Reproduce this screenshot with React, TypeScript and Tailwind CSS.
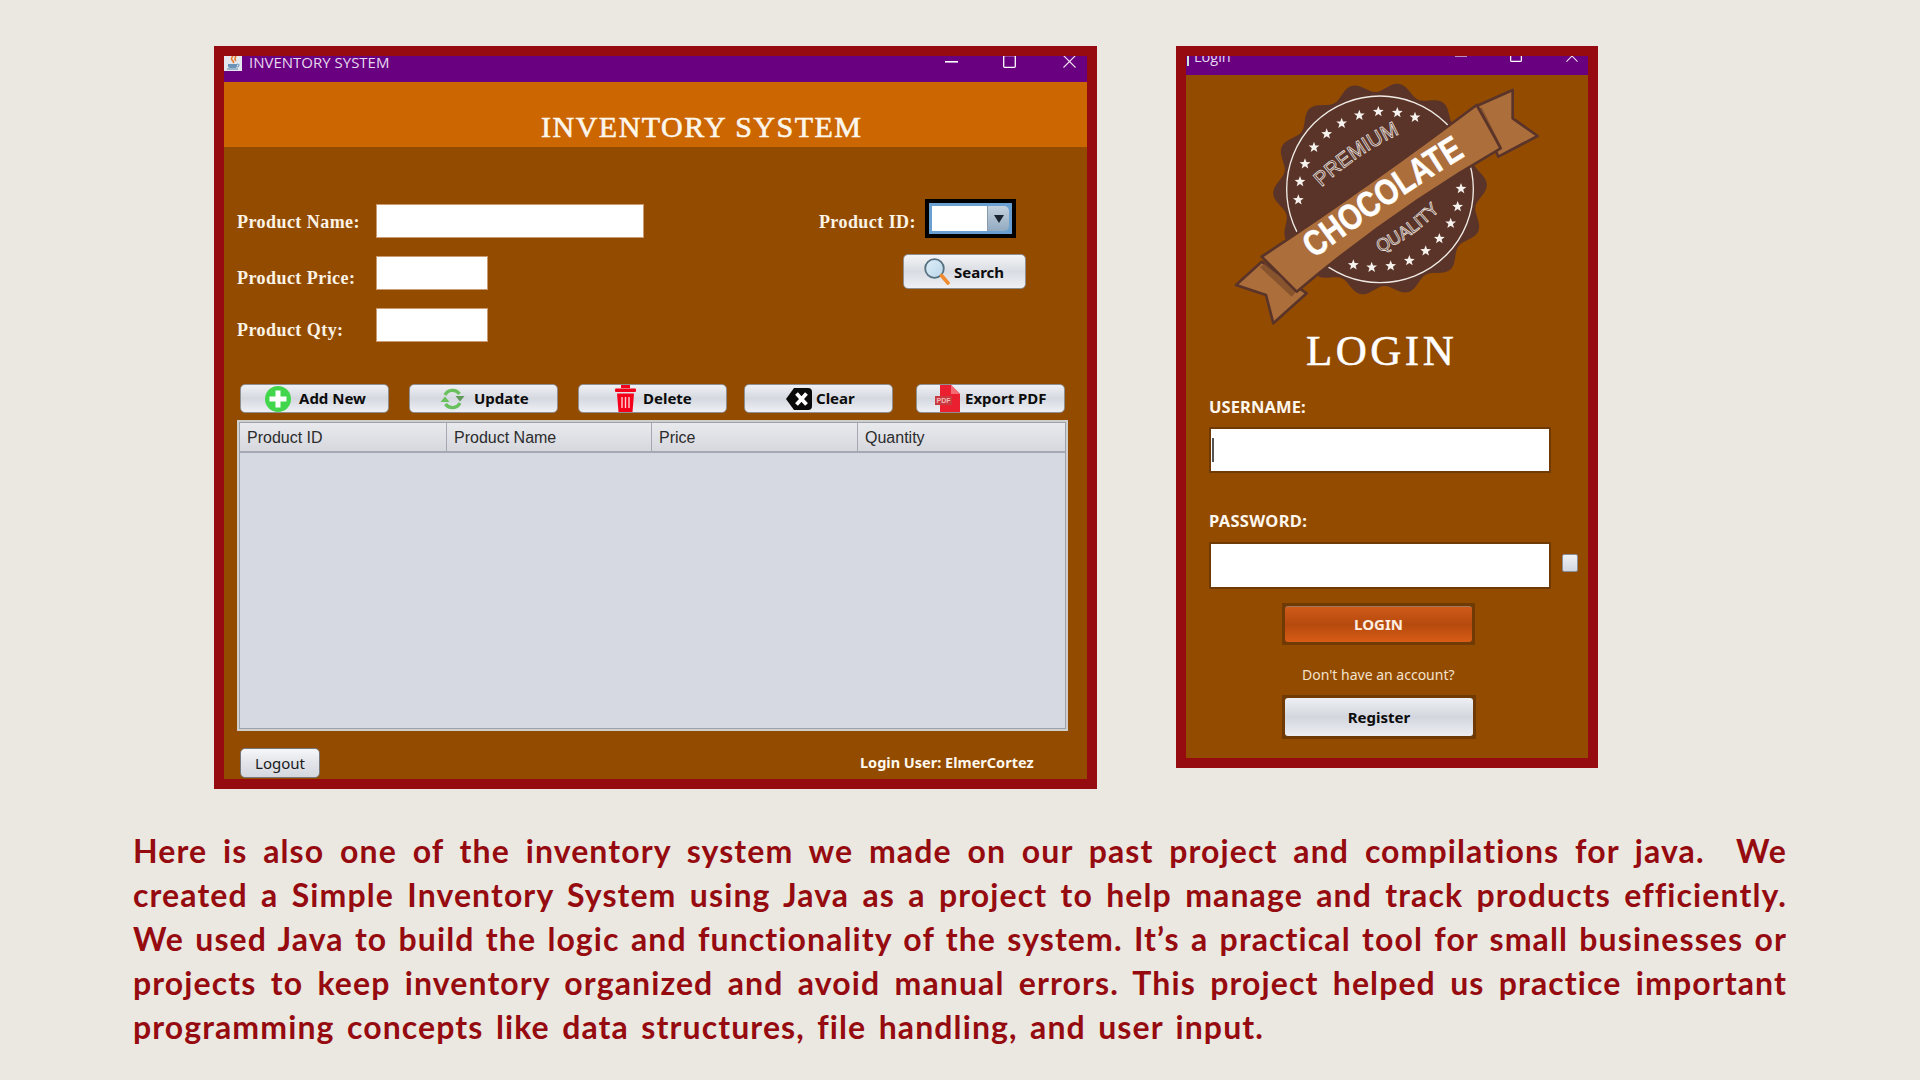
const scallop = (() => {
  const cx = 660, cy = 477, n = 14;
  const pts: string[] = [];
  for (let i = 0; i < 360; i += 2) {
    const t = (i * Math.PI) / 180;
    const r = 306 + 15 * Math.cos(n * t + 0.6);
    pts.push(`${(cx + r * Math.cos(t)).toFixed(1)},${(cy + r * Math.sin(t)).toFixed(1)}`);
  }
  return "M" + pts.join("L") + "Z";
})();

const starPts = (x: number, y: number, R = 17) => {
  const p: string[] = [];
  for (let i = 0; i < 10; i++) {
    const r = i % 2 ? R * 0.42 : R;
    const a = (-90 + i * 36) * Math.PI / 180;
    p.push(`${(x + r * Math.cos(a)).toFixed(1)},${(y + r * Math.sin(a)).toFixed(1)}`);
  }
  return p.join(" ");
};

const stars = [
  [415, 510], [420, 455], [435, 402], [462, 352], [500, 312], [545, 280], [598, 256], [655, 245], [712, 248], [765, 262],
  [580, 705], [635, 712], [692, 708], [748, 692], [797, 663], [838, 626], [872, 580], [893, 530], [903, 476],
];

function Badge() {
  return (
    <svg viewBox="0 0 402 255" className="block w-[402px] h-[255px]">
      <g transform="translate(-26,-45) scale(0.33333)">
        <path d={scallop} fill="#5a3429" />
        <circle cx="660" cy="478" r="280" fill="none" stroke="#f1ece6" strokeWidth="4" />
        {stars.map(([x, y], i) => (
          <polygon key={i} points={starPts(x, y)} fill="#f6f2ee" />
        ))}
        <path id="premArc" d="M 485 472 Q 590 372 718 312" fill="none" />
        <text fontFamily="'Liberation Sans', sans-serif" fontSize="62" fill="#5a3429" stroke="#efe9e3" strokeWidth="2.2">
          <textPath href="#premArc" textLength="285" lengthAdjust="spacingAndGlyphs">PREMIUM</textPath>
        </text>
        <path id="qualArc" d="M 660 668 Q 762 622 840 540" fill="none" />
        <text fontFamily="'Liberation Sans', sans-serif" fontSize="54" fill="#5a3429" stroke="#efe9e3" strokeWidth="2.2">
          <textPath href="#qualArc" textLength="222" lengthAdjust="spacingAndGlyphs">QUALITY</textPath>
        </text>
        <path d="M 305 695 L 228 765 L 318 795 L 340 880 L 440 790 Z" fill="#ac6f3c" stroke="#5a3429" strokeWidth="8" strokeLinejoin="round" />
        <path d="M 950 228 L 1058 180 L 1058 265 L 1133 318 L 1015 380 Z" fill="#ac6f3c" stroke="#5a3429" strokeWidth="8" strokeLinejoin="round" />
        <path d="M 315 700 L 408 785 L 395 800 L 300 712 Z" fill="#7c4b2a" opacity="0.75" />
        <path d="M 965 232 L 1025 352 L 1010 362 L 950 240 Z" fill="#7c4b2a" opacity="0.75" />
        <path d="M 305 680 Q 610 480 950 225 Q 990 295 1022 355 Q 700 540 410 785 Q 360 735 305 680 Z" fill="#ac6f3c" stroke="#5a3429" strokeWidth="8" strokeLinejoin="round" />
        <path id="chocArc" d="M 462 686 Q 680 522 922 374" fill="none" />
        <text fontFamily="'Liberation Sans', sans-serif" fontWeight="700" fontSize="108" fill="#ffffff" stroke="#ffffff" strokeWidth="1.5">
          <textPath href="#chocArc" textLength="550" lengthAdjust="spacingAndGlyphs">CHOCOLATE</textPath>
        </text>
      </g>
    </svg>
  );
}

const JavaIcon = () => (
  <svg viewBox="0 0 18 15" className="w-[18px] h-[15px] shrink-0">
    <rect x="0" y="0" width="18" height="15" fill="#e4e8ee" />
    <path d="M9 0 Q6 3 9 5 Q10 6 9 7 M12 0 Q10 3 12 5" stroke="#e87a2a" strokeWidth="1.6" fill="none" />
    <path d="M4 8 H13 V10 Q13 12 10 12 H7 Q4 12 4 10 Z" fill="#6a93b8" />
    <path d="M13 8 Q16 8 15 10 Q14 11 13 11" stroke="#6a93b8" fill="none" />
    <path d="M3 13 H14" stroke="#6a93b8" strokeWidth="1.2" />
  </svg>
);

const WinControls = ({ a, b, c }: { a: string; b: string; c: string }) => (
  <>
    <svg viewBox="0 0 13 2" className={a}><rect width="13" height="1.6" fill="#ffffff" /></svg>
    <svg viewBox="0 0 13 13" className={b}><rect x="0.7" y="0.7" width="11.6" height="11.6" rx="1" fill="none" stroke="#ffffff" strokeWidth="1.3" /></svg>
    <svg viewBox="0 0 13 13" className={c}><path d="M0.5 0.5 L12.5 12.5 M12.5 0.5 L0.5 12.5" stroke="#f2e6f2" strokeWidth="1.1" /></svg>
  </>
);

const PlusIcon = () => (
  <svg viewBox="0 0 26 26" className="w-[26px] h-[26px] shrink-0">
    <circle cx="13" cy="13" r="13" fill="#41d64b" />
    <path d="M10.5 4.5 H15.5 V10.5 H21.5 V15.5 H15.5 V21.5 H10.5 V15.5 H4.5 V10.5 H10.5 Z" fill="#ffffff" />
  </svg>
);
const RefreshIcon = () => (
  <svg viewBox="0 0 25 24" className="w-[25px] h-[24px] shrink-0">
    <path d="M5 8 A8.500 8.500 0 0 1 19.500 7" fill="none" stroke="#69c05c" strokeWidth="3.400" />
    <path d="M20 16 A8.500 8.500 0 0 1 5.500 17" fill="none" stroke="#69c05c" strokeWidth="3.400" />
    <path d="M15.500 9 H24.500 L20 14.500 Z" fill="#5f9a58" />
    <path d="M0.500 15 H9.500 L5 9.500 Z" fill="#69c05c" />
  </svg>
);
const TrashIcon = () => (
  <svg viewBox="0 0 21 27" className="w-[21px] h-[27px] shrink-0">
    <rect x="6" y="0" width="9" height="3" fill="#f4001b" />
    <rect x="0" y="3.500" width="21" height="3.500" rx="1" fill="#f4001b" />
    <path d="M2 8.500 H19 L17.500 27 H3.500 Z" fill="#f4001b" />
    <path d="M7 12 V23 M10.500 12 V23 M14 12 V23" stroke="#ffd0d0" strokeWidth="1.4" />
  </svg>
);
const ClearIcon = () => (
  <svg viewBox="0 0 26 24" className="w-[26px] h-[24px] shrink-0">
    <path d="M8 1 H22 Q26 1 26 5 V19 Q26 23 22 23 H8 L0 12 Z" fill="#0a0a0a" />
    <path d="M10.500 6.500 L20.500 17.500 M20.500 6.500 L10.500 17.500" stroke="#ffffff" strokeWidth="3.800" />
  </svg>
);
const PdfIcon = () => (
  <svg viewBox="0 0 25 27" className="w-[25px] h-[27px] shrink-0">
    <path d="M5 0 H16 L25 9 V27 H5 Z" fill="#ea2030" />
    <path d="M16 0 L25 9 H16 Z" fill="#f56a72" />
    <rect x="0" y="11" width="17" height="9" fill="#c83a3f" />
    <text x="8.500" y="18" textAnchor="middle" fontSize="7" fontWeight="700" fill="#f3b7b7" fontFamily="'Liberation Sans', sans-serif">PDF</text>
  </svg>
);
const SearchIcon = () => (
  <svg viewBox="0 0 26 28" className="w-[26px] h-[28px] shrink-0">
    <defs>
      <linearGradient id="lens" x1="0" y1="0" x2="1" y2="1">
        <stop offset="0" stopColor="#dfeef8" />
        <stop offset="1" stopColor="#b9d6ea" />
      </linearGradient>
    </defs>
    <circle cx="10.500" cy="10.500" r="9.300" fill="url(#lens)" stroke="#56707f" strokeWidth="1.800" />
    <path d="M17.500 17.500 L24 25" stroke="#f08a2e" strokeWidth="3.600" strokeLinecap="round" />
  </svg>
);

const btnBase =
  "h-[29px] w-[149px] flex items-center rounded-[5px] border border-[#8f8f92] bg-gradient-to-b from-[#eff1f4] via-[#d5d8df] to-[#eef0f5] text-[15px] font-bold text-[#0c0c0c] font-['Noto_Sans',sans-serif]";

const Label = ({ children, className = "" }: { children: string; className?: string }) => (
  <span className={"text-[18px] leading-[20px] tracking-[0.45px] font-bold text-[#fbf3e6] font-['Liberation_Serif',serif] " + className}>{children}</span>
);

const lines = [
  "Here is also one of the inventory system we made on our past project and compilations for java.  We",
  "created a Simple Inventory System using Java as a project to help manage and track products efficiently.",
  "We used Java to build the logic and functionality of the system. It’s a practical tool for small businesses or",
  "projects to keep inventory organized and avoid manual errors. This project helped us practice important",
];

export default function App() {
  return (
    <div className="w-[1920px] h-[1080px] overflow-hidden bg-[#eae8e1] font-['Noto_Sans',sans-serif]">
      <div className="flex items-start pt-[46px] pl-[214px] gap-[79px]">
        {/* Inventory window */}
        <div className="w-[883px] h-[743px] border-[10px] border-[#960b0f] flex flex-col bg-[#934b00]">
          <div className="h-[26px] shrink-0 bg-[#690080] flex items-start overflow-hidden relative">
            <JavaIcon />
            <span className="ml-[7px] -mt-[1px] text-[15px] leading-[14px] text-[#e6d8ee] font-['Open_Sans',sans-serif]">INVENTORY SYSTEM</span>
            <div className="ml-auto flex items-start pr-[11px]">
              <WinControls a="w-[13px] h-[2px] mt-[5px]" b="w-[13px] h-[13px] ml-[45px] -mt-[1px]" c="w-[13px] h-[13px] ml-[47px] -mt-[1px]" />
            </div>
          </div>
          <div className="h-[65px] shrink-0 bg-[#cc6600] flex items-center pl-[317px] pt-[24px]">
            <span className="text-[30px] leading-[36px] tracking-[1.5px] [-webkit-text-stroke:0.6px_#fdf6ec] text-[#fdf6ec] font-['Liberation_Serif',serif]">INVENTORY SYSTEM</span>
          </div>
          <div className="flex pt-[52px] h-[237px] shrink-0">
            <div className="pl-[13px] pt-[5px] flex flex-col gap-[18px]">
              <div className="flex items-start h-[34px]">
                <Label className="w-[139px] mt-[8px]">Product Name:</Label>
                <div className="w-[268px] h-[34px] bg-white border border-[#c99b72]" />
              </div>
              <div className="flex items-start h-[34px]">
                <Label className="w-[139px] mt-[12px]">Product Price:</Label>
                <div className="w-[112px] h-[34px] bg-white border border-[#c99b72]" />
              </div>
              <div className="flex items-start h-[34px]">
                <Label className="w-[139px] mt-[12px]">Product Qty:</Label>
                <div className="w-[112px] h-[34px] bg-white border border-[#c99b72]" />
              </div>
            </div>
            <div className="ml-auto mr-[61px] flex flex-col items-end">
              <div className="flex items-start mr-[10px]">
                <Label className="mt-[13px] mr-[9px]">Product ID:</Label>
                <div className="w-[91px] h-[39px] border-[4px] border-black bg-[#6a9fd2] flex items-center pl-[3px] pr-[3px]">
                  <div className="w-[56px] h-[25px] bg-white" />
                  <div className="w-[22px] h-[25px] rounded-r-[5px] bg-gradient-to-b from-[#c4d2de] to-[#92aac0] border-l border-[#8a9bac] flex items-center justify-center">
                    <svg viewBox="0 0 10 8" className="w-[10px] h-[8px]"><path d="M0 0 H10 L5 8 Z" fill="#1a2430" /></svg>
                  </div>
                </div>
              </div>
              <div className="mt-[16px] w-[123px] h-[35px] flex items-center pl-[20px] gap-[4px] rounded-[5px] border border-[#8f8f92] bg-gradient-to-b from-[#f3f4f6] via-[#d9dce2] to-[#eef0f5] text-[15px] font-bold text-[#0c0c0c]">
                <SearchIcon />
                <span className="mt-[2px]">Search</span>
              </div>
            </div>
          </div>
          <div className="flex pl-[16px] shrink-0">
            <div className={btnBase + " pl-[24px] gap-[8px]"}><PlusIcon /><span>Add New</span></div>
            <div className={btnBase + " ml-[20px] pl-[30px] gap-[9px]"}><RefreshIcon /><span>Update</span></div>
            <div className={btnBase + " ml-[20px] pl-[36px] gap-[7px]"}><TrashIcon /><span>Delete</span></div>
            <div className={btnBase + " ml-[17px] pl-[41px] gap-[4px]"}><ClearIcon /><span>Clear</span></div>
            <div className={btnBase + " ml-[23px] pl-[18px] gap-[5px]"}><PdfIcon /><span>Export PDF</span></div>
          </div>
          <div className="ml-[13px] mt-[7px] w-[831px] h-[311px] shrink-0 border-[2px] border-[#cfcfcd] bg-[#d6d9e2]">
            <div className="h-full border-[1.500px] border-[#9da1ab] flex flex-col">
              <div className="h-[30px] shrink-0 grid grid-cols-[207px_205px_206px_1fr] border-b-[2px] border-[#a4a8b2] bg-gradient-to-b from-[#e9eaed] via-[#dfe1e6] to-[#d6d8de] text-[16px] leading-[30px] text-[#2c2c2c] font-['Liberation_Sans',sans-serif]">
                {["Product ID", "Product Name", "Price", "Quantity"].map((h, i) => (
                  <div key={h} className={"pl-[7px] " + (i < 3 ? "border-r-[1.500px] border-[#a4a8b2]" : "")}>{h}</div>
                ))}
              </div>
              <div className="flex-1" />
            </div>
          </div>
          <div className="flex items-start ml-[16px] mt-[17px]">
            <div className="w-[80px] h-[30px] rounded-[5px] border border-[#77777a] bg-gradient-to-b from-[#f6f7f9] via-[#e2e4e9] to-[#d4d7de] flex items-center justify-center text-[15px] text-[#1a1a1a]">Logout</div>
            <span className="ml-[540px] mt-[4px] text-[14.500px] leading-[20px] font-bold text-[#fff8ee]">Login User: ElmerCortez</span>
          </div>
        </div>

        {/* Login window */}
        <div className="w-[422px] h-[722px] border-[10px] border-[#960b0f] flex flex-col bg-[#934b00]">
          <div className="h-[19px] shrink-0 bg-[#690080] flex items-start overflow-hidden">
            <div className="w-[2px] h-[10px] ml-[1px] bg-[#cfe8d8]" />
            <span className="ml-[5px] -mt-[6px] text-[14.500px] leading-[14px] text-[#e6d8ee] font-['Open_Sans',sans-serif]">Login</span>
            <div className="ml-auto flex items-start pr-[10px]">
              <WinControls a="w-[12px] h-[2px] -mt-[1px]" b="w-[12px] h-[12px] ml-[43px] -mt-[6px]" c="w-[12px] h-[12px] ml-[44px] -mt-[6px]" />
            </div>
          </div>
          <Badge />
          <div className="pl-[120px] mt-[1px] h-[40px] text-[43px] leading-[40px] tracking-[3.500px] [-webkit-text-stroke:0.5px_#ffffff] text-white font-['Liberation_Serif',serif]">LOGIN</div>
          <div className="ml-[23px] mt-[26px] h-[20px] text-[16.500px] leading-[20px] tracking-[0.1px] font-bold text-[#fdf7ee]">USERNAME:</div>
          <div className="ml-[23px] mt-[10px] w-[342px] h-[46px] border-[2.500px] border-[#6f3a04] bg-white flex items-center pl-[1px]">
            <div className="w-[2px] h-[24px] bg-[#555]" />
          </div>
          <div className="ml-[23px] mt-[38px] h-[20px] text-[16.500px] leading-[20px] tracking-[0.3px] font-bold text-[#fdf7ee]">PASSWORD:</div>
          <div className="flex items-center ml-[23px] mt-[11px]">
            <div className="w-[342px] h-[47px] border-[2.500px] border-[#6f3a04] bg-white" />
            <div className="ml-[11px] -mt-[5px] w-[16px] h-[18px] rounded-[2px] border border-[#8a8e99] bg-gradient-to-b from-[#f0f1f4] to-[#d3d7df]" />
          </div>
          <div className="ml-[96px] mt-[14px] w-[193px] h-[42px] border-[3px] border-[#6f3a04] bg-[#6f3a04]">
            <div className="h-full rounded-[3px] bg-gradient-to-b from-[#d05a18] via-[#b64a0e] to-[#d85c16] border-t border-[#a0785a] flex items-center justify-center text-[15px] font-bold text-[#fdeee0]">LOGIN</div>
          </div>
          <div className="mt-[20px] pl-[116px] h-[20px] text-[14px] leading-[20px] text-[#f3e2cc]">Don't have an account?</div>
          <div className="ml-[96px] mt-[10px] w-[194px] h-[44px] border-[3px] border-[#6f3a04] bg-[#6f3a04]">
            <div className="h-full rounded-[3px] bg-gradient-to-b from-[#eef0f3] via-[#d3d6de] to-[#eceef3] flex items-center justify-center text-[15px] font-bold text-[#0c0c0c]">Register</div>
          </div>
        </div>
      </div>

      <div className="mt-[40px] ml-[133px] w-[1654px] text-[32px] leading-[44px] font-bold tracking-[1.1px] text-[#960b0f] font-['Lato',sans-serif]">
        {lines.map((l) => (
          <div key={l} className="text-justify [text-align-last:justify] whitespace-pre-wrap">{l}</div>
        ))}
        <div className="w-[1131px] text-justify [text-align-last:justify]">programming concepts like data structures, file handling, and user input.</div>
      </div>
    </div>
  );
}
